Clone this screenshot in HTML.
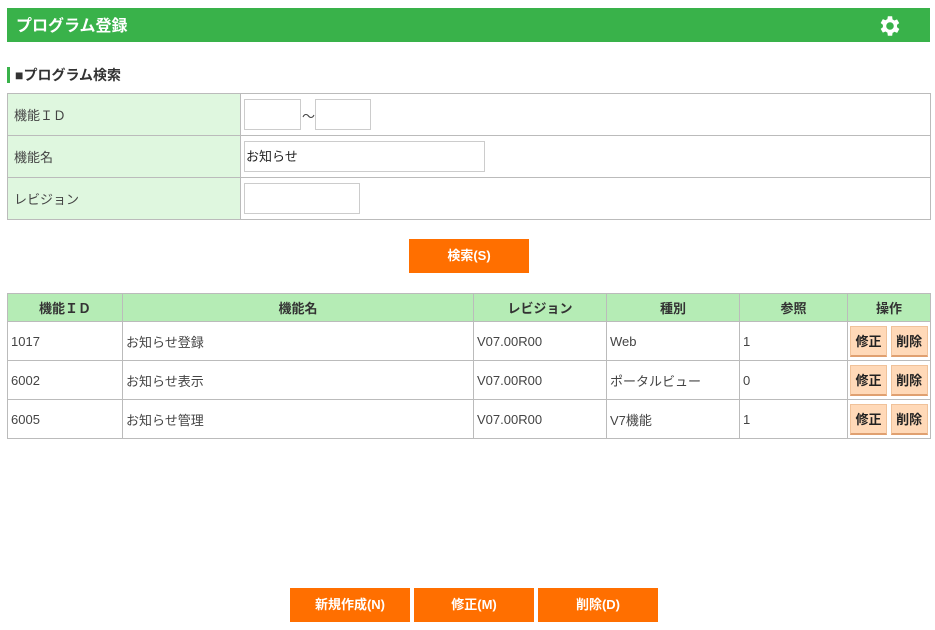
<!DOCTYPE html>
<html><head><meta charset="utf-8"><style>
*{box-sizing:border-box;margin:0;padding:0}
body{width:935px;height:630px;background:#fff;font-family:"Liberation Sans","Noto Sans CJK JP",sans-serif;font-size:13px;color:#444;position:relative;overflow:hidden}
.hdr{position:absolute;left:7px;top:8px;width:923px;height:34px;background:#39b24a;color:#fff;font-weight:bold;font-size:16px}
.hdr span{position:absolute;left:9px;top:9px;line-height:20px}
.sec{position:absolute;left:7px;top:67px;height:16px;border-left:3px solid #39b24a;padding-left:5px;font-weight:bold;font-size:14px;line-height:16px;color:#333}
table{position:absolute;border-collapse:collapse}
td,th{border:1px solid #bbb}
.s{left:7px;top:93px;width:924px}
.s td{height:42px}
.s td.l{width:233px;background:#dff7df;padding-left:6px}
.inp{position:absolute;border:1px solid #ccc;height:31px;background:#fff;font-size:13px;line-height:29px;padding-left:1px;color:#222}
.btn{position:absolute;background:#ff6f00;color:#fff;font-weight:bold;text-align:center;line-height:34px;height:34px;width:120px;font-size:13px}
.r{left:7px;top:293px;width:924px}
.r th{background:#b5ecb5;height:28px;font-size:13px;color:#333}
.r td{height:39px;padding-left:3px}
.ob{display:inline-block;background:#ffd9b8;border:1px solid #f0c29a;border-bottom:2px solid #e0a070;font-weight:bold;width:37px;height:31px;line-height:29px;text-align:center;color:#222}
</style></head><body>
<div class="hdr"><span>プログラム登録</span>
<svg style="position:absolute;left:870px;top:5px" width="26" height="26" viewBox="0 0 24 24"><path fill="#fff" fill-rule="evenodd" d="M19.4 13a7.5 7.5 0 0 0 0-2l2.1-1.6-2-3.5-2.5 1a7.6 7.6 0 0 0-1.7-1L15 3h-4l-.4 2.7a7.6 7.6 0 0 0-1.7 1l-2.5-1-2 3.5L6.5 11a7.5 7.5 0 0 0 0 2l-2.1 1.6 2 3.5 2.5-1a7.6 7.6 0 0 0 1.7 1L11 21h4l.4-2.7a7.6 7.6 0 0 0 1.7-1l2.5 1 2-3.5zM13 15.5a3.5 3.5 0 1 1 0-7 3.5 3.5 0 0 1 0 7z" transform="translate(-1 0)"/></svg></div>
<div class="sec">■プログラム検索</div>
<table class="s">
<tr><td class="l">機能ＩＤ</td><td></td></tr>
<tr><td class="l">機能名</td><td></td></tr>
<tr><td class="l">レビジョン</td><td></td></tr>
</table>
<div class="inp" style="left:244px;top:99px;width:57px"></div>
<div style="position:absolute;left:302px;top:106px">～</div>
<div class="inp" style="left:315px;top:99px;width:56px"></div>
<div class="inp" style="left:244px;top:141px;width:241px">お知らせ</div>
<div class="inp" style="left:244px;top:183px;width:116px"></div>
<div class="btn" style="left:409px;top:239px">検索(S)</div>
<table class="r">
<tr><th style="width:115px">機能ＩＤ</th><th style="width:351px">機能名</th><th style="width:133px">レビジョン</th><th style="width:133px">種別</th><th style="width:108px">参照</th><th>操作</th></tr>
<tr><td>1017</td><td>お知らせ登録</td><td>V07.00R00</td><td>Web</td><td>1</td><td style="padding-left:2px"><span class="ob">修正</span> <span class="ob">削除</span></td></tr>
<tr><td>6002</td><td>お知らせ表示</td><td>V07.00R00</td><td>ポータルビュー</td><td>0</td><td style="padding-left:2px"><span class="ob">修正</span> <span class="ob">削除</span></td></tr>
<tr><td>6005</td><td>お知らせ管理</td><td>V07.00R00</td><td>V7機能</td><td>1</td><td style="padding-left:2px"><span class="ob">修正</span> <span class="ob">削除</span></td></tr>
</table>
<div class="btn" style="left:290px;top:588px">新規作成(N)</div>
<div class="btn" style="left:414px;top:588px">修正(M)</div>
<div class="btn" style="left:538px;top:588px">削除(D)</div>
</body></html>
